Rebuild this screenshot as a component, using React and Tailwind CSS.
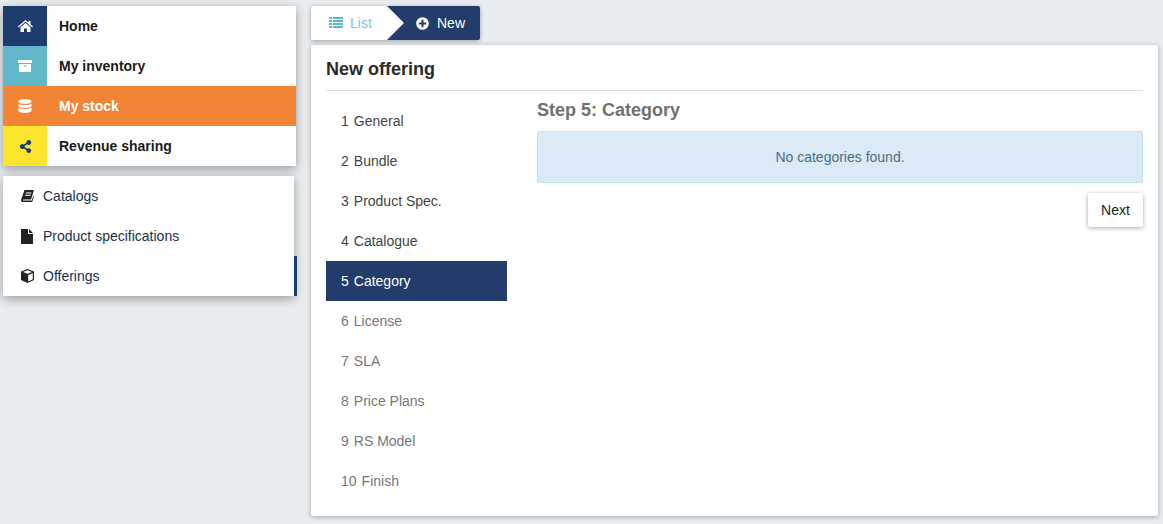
import React from "react";
import { FaShareAlt, FaPlusCircle } from "react-icons/fa";

const HomeIcon = () => (
  <svg width="15" height="12" viewBox="0 0 15 12" fill="currentColor">
    <path d="M7.5 0 10.5 2.6V1h2v3.3L15 6.5l-.8.9L7.5 1.8.8 7.4 0 6.5z" />
    <path d="M7.5 3 12.5 7.2V12H9V8.5H6V12H2.500V7.200z" />
  </svg>
);

const ArchiveIcon = () => (
  <svg width="14" height="12" viewBox="0 0 14 12" fill="currentColor">
    <rect x="0" y="0" width="14" height="3" />
    <path d="M1 4h12v8H1zM5.500 5.500v1h3v-1z" fillRule="evenodd" />
  </svg>
);

const DatabaseIcon = () => (
  <svg width="14" height="14" viewBox="0 0 14 14" fill="currentColor">
    <ellipse cx="7" cy="2.500" rx="6.500" ry="2.500" />
    <path d="M.5 4.200C1.500 5.600 4 6.100 7 6.100s5.500-.5 6.500-1.900v2.300C13.500 7.900 10.600 9 7 9S.5 7.900.5 6.500z" />
    <path d="M.5 8C1.500 9.400 4 9.900 7 9.900S12.500 9.400 13.500 8v3.500C13.500 12.900 10.600 14 7 14S.5 12.900.5 11.500z" />
  </svg>
);

const BookIcon = () => (
  <svg width="13" height="12" viewBox="0 0 13 12" fill="currentColor">
    <path d="M3.500 0H13L10 9.500H2.800C2 9.500 1.700 10 2 10.500h8.800l1.400-4.500.8.500L11.200 12H1.500C.4 12-.2 10.800.1 9.800z" />
    <path d="M5 2.500h5.500l-.3 1H4.700zM4.300 4.800h5.500l-.3 1H4z" fill="#ffffff" />
  </svg>
);

const FileIcon = () => (
  <svg width="12" height="15" viewBox="0 0 12 15" fill="currentColor">
    <path d="M0 0h7v5h5v10H0z" />
    <path d="M8 0l4 4H8z" />
  </svg>
);

const CubeIcon = () => (
  <svg width="13" height="14" viewBox="0 0 13 14" fill="currentColor">
    <path d="M6.500 0 13 2.500V11l-6.500 3L0 11V2.500zM6.500 1.300 2 3l4.500 1.800L11 3zM7.200 6v6.400l4.600-2.100V4.200z" fillRule="evenodd" />
  </svg>
);

const ListIcon = () => (
  <svg width="14" height="12" viewBox="0 0 14 12" fill="currentColor">
    <path d="M0 0h3v2H0zM4 0h10v2H4zM0 3h3v2H0zM4 3h10v2H4zM0 6h3v2H0zM4 6h10v2H4zM0 9h3v2H0zM4 9h10v2H4z" />
  </svg>
);

const mainMenu = [
  { label: "Home", icon: HomeIcon, tile: "bg-[#1f3c6e] text-white", row: "text-[#1a1a1a]" },
  { label: "My inventory", icon: ArchiveIcon, tile: "bg-[#62b6ca] text-white", row: "text-[#1a1a1a]" },
  { label: "My stock", icon: DatabaseIcon, tile: "bg-[#f28436] text-white", row: "bg-[#f28436] text-white" },
  { label: "Revenue sharing", icon: FaShareAlt, tile: "bg-[#fde52e] text-[#1f3c6e]", row: "text-[#1a1a1a]" },
];

const subMenu = [
  { label: "Catalogs", icon: BookIcon },
  { label: "Product specifications", icon: FileIcon },
  { label: "Offerings", icon: CubeIcon, active: true },
];

const steps = ["General", "Bundle", "Product Spec.", "Catalogue", "Category", "License", "SLA", "Price Plans", "RS Model", "Finish"];

export default function App() {
  return (
    <div className="flex h-[524px] w-[1163px] overflow-hidden bg-[#e9edf0] pt-[6px] pl-[3px] font-['Liberation_Sans',Arial,sans-serif] text-sm text-[#333]">
      {/* SIDEBAR */}
      <div className="w-[293px] shrink-0">
        <div className="bg-white shadow-[0_3px_10px_rgba(0,0,0,0.35)]">
          {mainMenu.map((m) => (
            <div key={m.label} className={`flex h-10 items-center font-bold ${m.row}`}>
              <div className={`flex h-10 w-11 items-center justify-center text-[13px] ${m.tile}`}>
                <m.icon />
              </div>
              <span className="ml-3">{m.label}</span>
            </div>
          ))}
        </div>

        <div className="mt-[10px] w-[291px] bg-white shadow-[0_3px_10px_rgba(0,0,0,0.35)]">
          {subMenu.map((s) => (
            <div
              key={s.label}
              className={`flex h-10 items-center pl-[18px] text-[#1c2f4f] ${s.active ? "-mr-[3px] border-r-[3px] border-[#1f3c6e]" : ""}`}
            >
              <span className="flex w-[22px] justify-start text-[#222]">
                <s.icon />
              </span>
              <span>{s.label}</span>
            </div>
          ))}
        </div>
      </div>

      {/* MAIN */}
      <div className="ml-[15px] w-[847px] shrink-0">
        <div className="flex h-[34px] w-[169px] overflow-hidden rounded-[2px] shadow-[0_1px_4px_rgba(0,0,0,0.35)]">
          <div className="flex w-[76px] items-center bg-white pl-[18px] text-[#7fc4d6]">
            <span className="mr-[7px] text-[#62b6ca]">
              <ListIcon />
            </span>
            List
          </div>
          <div className="relative flex flex-1 items-center bg-[#223c6b] pl-[29px] text-white">
            <span className="absolute top-0 left-0 h-0 w-0 border-y-[17px] border-l-[17px] border-y-transparent border-l-white" />
            <FaPlusCircle className="mr-[8px] text-[13px]" />
            New
          </div>
        </div>

        <div className="mt-[5px] h-[471px] rounded-[2px] bg-white px-[15px] shadow-[0_1px_5px_rgba(0,0,0,0.3)]">
          <h1 className="flex h-[46px] items-end border-b border-[#dddddd] pb-[11px] text-lg leading-5 font-bold text-[#2b2b2b]">
            New offering
          </h1>
          <div className="mt-[10px] flex">
            <div className="w-[181px] shrink-0">
              {steps.map((s, i) => (
                <div
                  key={s}
                  className={`flex h-10 items-center gap-[5px] px-[15px] ${
                    i === 4 ? "bg-[#223c6b] text-white" : i < 4 ? "text-[#444]" : "text-[#777]"
                  }`}
                >
                  <span>{i + 1}</span>
                  <span>{s}</span>
                </div>
              ))}
            </div>
            <div className="ml-[30px] flex-1">
              <h2 className="-mt-[1px] text-lg leading-5 font-bold text-[#707070]">Step 5: Category</h2>
              <div className="mt-[11px] flex h-[52px] items-center justify-center rounded-[2px] border border-[#bfe3f0] bg-[#daeaf6] text-[#4c6f86]">
                No categories found.
              </div>
              <div className="mt-[10px] flex justify-end">
                <button className="h-[34px] w-[55px] rounded-[2px] bg-white text-[#222] shadow-[0_1px_4px_rgba(0,0,0,0.35)]">
                  Next
                </button>
              </div>
            </div>
          </div>
        </div>
      </div>
    </div>
  );
}
